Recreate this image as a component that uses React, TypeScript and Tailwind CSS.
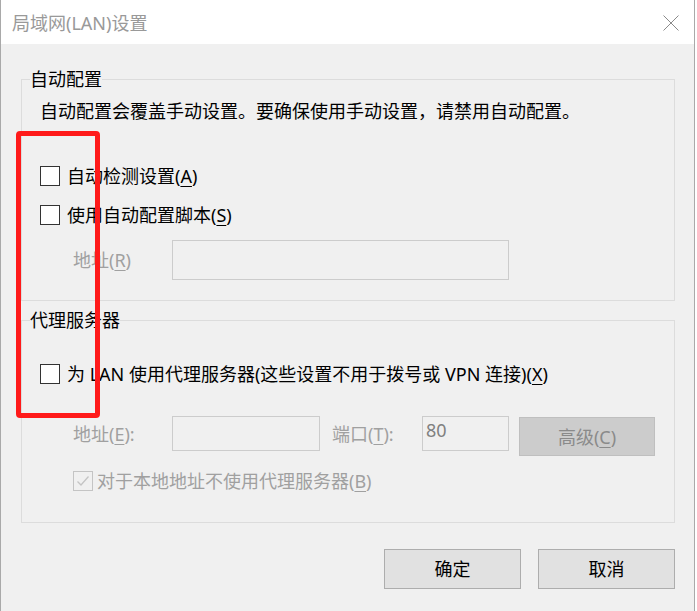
import type { ReactNode } from "react";

const FONT = '"Noto Sans", "Noto Sans CJK SC", sans-serif';

function Key({ k }: { k: string }) {
  return (
    <>
      (<u className="underline underline-offset-[3px] decoration-1">{k}</u>)
    </>
  );
}

function CheckBox({ checked = false, disabled = false }: { checked?: boolean; disabled?: boolean }) {
  return (
    <span
      className={
        disabled
          ? "w-[20px] h-[20px] shrink-0 border border-[#c4c4c4] bg-[#f0f0f0] flex items-center justify-center"
          : "w-[20px] h-[20px] shrink-0 border border-[#333333] bg-white flex items-center justify-center"
      }
    >
      {checked && (
        <svg width="16" height="16" viewBox="0 0 16 16" fill="none">
          <path d="M2.5 8.5 L6 12 L13.5 3.5" stroke="#c4c4c4" strokeWidth="1.3" />
        </svg>
      )}
    </span>
  );
}

function CheckRow({ children, checked, disabled, className = "" }: { children: ReactNode; checked?: boolean; disabled?: boolean; className?: string }) {
  return (
    <div className={`flex items-center h-[24px] gap-[7px] ${className}`}>
      <CheckBox checked={checked} disabled={disabled} />
      <span className={disabled ? "text-[#a0a0a0]" : "text-black"}>{children}</span>
    </div>
  );
}

export default function App() {
  return (
    <div className="w-[697px] h-[611px] bg-white overflow-hidden text-[18px] leading-[24px]" style={{ fontFamily: FONT }}>
      <div className="w-[695px] h-full border-x border-[#a9a9a9] flex flex-col">
        {/* title bar */}
        <div className="h-[44px] bg-white flex items-center justify-between pl-[11px] pr-[15px] shrink-0">
          <span className="text-[18px] text-[#999999] mt-[1px]">局域网(LAN)设置</span>
          <svg width="16" height="16" viewBox="0 0 16 16" className="mt-[1px]">
            <path d="M0.5 0.5 L15.5 15.5 M15.5 0.5 L0.5 15.5" stroke="#8a8a8a" strokeWidth="1" />
          </svg>
        </div>

        <div className="flex-1 bg-[#f0f0f0] pl-[20px] pr-[19px] pt-[23px] relative">
          {/* auto config */}
          <fieldset className="border border-[#dcdcdc] pl-[8px] pb-[20px]">
            <legend className="px-0 leading-[24px] text-black">自动配置</legend>
            <p className="mt-[8px] ml-[10px] text-black">自动配置会覆盖手动设置。要确保使用手动设置，请禁用自动配置。</p>
            <CheckRow className="mt-[41px] ml-[10px]">
              自动检测设置<Key k="A" />
            </CheckRow>
            <CheckRow className="mt-[15px] ml-[10px]">
              使用自动配置脚本<Key k="S" />
            </CheckRow>
            <div className="mt-[13px] ml-[43px] flex items-center h-[40px]">
              <span className="w-[99px] text-[#a0a0a0]">
                地址<Key k="R" />
              </span>
              <div className="w-[337px] h-[40px] border border-[#cccccc] bg-[#f0f0f0]" />
            </div>
          </fieldset>

          {/* proxy */}
          <fieldset className="mt-[7px] border border-[#dcdcdc] pl-[8px] pb-[29px]">
            <legend className="px-0 leading-[24px] text-black">代理服务器</legend>
            <CheckRow className="mt-[30px] ml-[10px]">
              为 LAN 使用代理服务器(这些设置不用于拨号或 VPN 连接)<Key k="X" />
            </CheckRow>
            <div className="mt-[30px] ml-[43px] flex items-start h-[40px] text-[#a0a0a0]">
              <span className="w-[99px] h-[35px] flex items-center">
                地址<Key k="E" />:
              </span>
              <div className="w-[148px] h-[35px] border border-[#cccccc] bg-[#f0f0f0]" />
              <span className="ml-[12px] w-[90px] h-[35px] flex items-center">
                端口<Key k="T" />:
              </span>
              <div className="w-[87px] h-[35px] border border-[#cccccc] bg-[#f0f0f0] pl-[3px] leading-[26px] text-[#808080]">80</div>
              <div className="ml-[10px] mt-[1px] w-[136px] h-[39px] border border-[#bfbfbf] bg-[#cccccc] flex items-center justify-center text-[#8a8a8a]">
                高级<Key k="C" />
              </div>
            </div>
            <CheckRow className="mt-[13px] ml-[43px] !gap-[4px]" checked disabled>
              对于本地地址不使用代理服务器<Key k="B" />
            </CheckRow>
          </fieldset>

          {/* buttons */}
          <div className="mt-[26px] flex justify-end gap-[17px]">
            <div className="w-[137px] h-[40px] border border-[#adadad] bg-[#e1e1e1] flex items-center justify-center text-black">确定</div>
            <div className="w-[137px] h-[40px] border border-[#adadad] bg-[#e1e1e1] flex items-center justify-center text-black">取消</div>
          </div>

          {/* red annotation */}
          <div className="absolute left-[15px] top-[87px] w-[84px] h-[287px] border-[5px] border-[#ff1a1a] rounded-[4px] pointer-events-none" />
        </div>
      </div>
    </div>
  );
}
